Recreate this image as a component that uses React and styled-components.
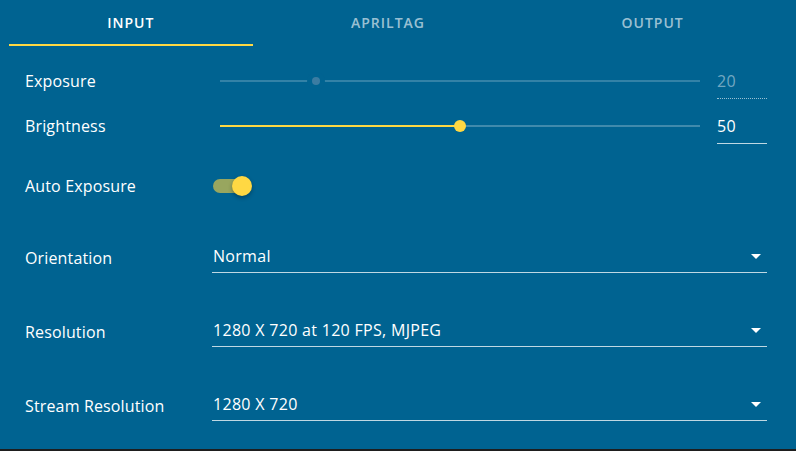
import React from "react";
import styled, { createGlobalStyle } from "styled-components";

const Global = createGlobalStyle`
  html, body { margin: 0; padding: 0; background: #1e1e1e; }
  body { font-family: "Open Sans", "Noto Sans", sans-serif; }
`;

const BG = "#006391";
const YELLOW = "#ffd843";

const Card = styled.div`
  width: 796px;
  height: 449px;
  background: ${BG};
  color: #fff;
  overflow: hidden;
`;

const Tabs = styled.div`
  display: flex;
  height: 46px;
  margin: 0 14px 0 9px;
`;

const Tab = styled.div`
  flex: 1 1 auto;
  display: flex;
  align-items: center;
  justify-content: center;
  padding: 0 16px;
  font-size: 14px;
  font-weight: 600;
  letter-spacing: 1px;
  text-transform: uppercase;
  color: ${(p) => (p.$active ? "#ffffff" : "rgba(255,255,255,0.62)")};
  border-bottom: 2px solid ${(p) => (p.$active ? YELLOW : "transparent")};
  box-sizing: border-box;
`;

const Content = styled.div`
  padding: 12px 29px 0 25px;
`;

const SliderRow = styled.div`
  height: 45px;
  display: grid;
  grid-template-columns: 178px 480px 1fr;
  align-items: center;
  column-gap: 17px;
`;

const Label = styled.div`
  font-size: 16px;
  font-weight: 500;
  letter-spacing: 0.15px;
  color: #fff;
`;

const Slider = styled.div`
  position: relative;
  height: 20px;
`;

const Track = styled.div`
  position: absolute;
  left: 0;
  right: 0;
  top: 9px;
  height: 2px;
  background: rgba(255, 255, 255, ${(p) => (p.$disabled ? 0.2 : 0.25)});
`;

const Fill = styled.div`
  position: absolute;
  left: 0;
  top: 9px;
  height: 2px;
  background: ${YELLOW};
`;

const Thumb = styled.div`
  position: absolute;
  top: 50%;
  width: ${(p) => (p.$disabled ? 8 : 12)}px;
  height: ${(p) => (p.$disabled ? 8 : 12)}px;
  border-radius: 50%;
  transform: translate(-50%, -50%);
  background: ${(p) => (p.$disabled ? "#3b7ca2" : YELLOW)};
  box-shadow: ${(p) => (p.$disabled ? `0 0 0 5px ${BG}` : "none")};
`;

const ValueField = styled.div`
  width: 50px;
  margin-top: 9px;
  padding-bottom: 7px;
  line-height: 20px;
  font-size: 16px;
  font-weight: 500;
  letter-spacing: 0.3px;
  color: ${(p) => (p.$disabled ? "rgba(255,255,255,0.45)" : "#fff")};
  border-bottom: 1px ${(p) => (p.$disabled ? "dotted" : "solid")}
    ${(p) => (p.$disabled ? "rgba(255,255,255,0.6)" : "rgba(255,255,255,0.75)")};
`;

const ToggleRow = styled.div`
  height: 70px;
  margin-top: 3px;
  display: grid;
  grid-template-columns: 187px auto;
  align-items: center;
`;

const Switch = styled.div`
  position: relative;
  width: 34px;
  height: 14px;
  margin-left: 1px;
  border-radius: 7px;
  background: #98a65f;
`;

const Knob = styled.div`
  position: absolute;
  right: -5px;
  top: -3px;
  width: 20px;
  height: 20px;
  border-radius: 50%;
  background: ${YELLOW};
  box-shadow: 0 2px 4px rgba(0, 0, 0, 0.3);
`;

const SelectRow = styled.div`
  height: 74px;
  display: grid;
  grid-template-columns: 187px 1fr;
  align-items: center;
`;

const Select = styled.div`
  display: flex;
  align-items: center;
  justify-content: space-between;
  height: 32px;
  margin-top: -3px;
  padding: 0 6px 0 1px;
  border-bottom: 1px solid rgba(255, 255, 255, 0.75);
  font-size: 16px;
  font-weight: 500;
  letter-spacing: 0.3px;
`;

const Arrow = styled.span`
  width: 0;
  height: 0;
  border-left: 5px solid transparent;
  border-right: 5px solid transparent;
  border-top: 5px solid #fff;
  margin-top: 1px;
`;

const sliders = [
  { label: "Exposure", value: 20, pct: 20, disabled: true },
  { label: "Brightness", value: 50, pct: 50, disabled: false },
];

const selects = [
  { label: "Orientation", value: "Normal" },
  { label: "Resolution", value: "1280 X 720 at 120 FPS, MJPEG" },
  { label: "Stream Resolution", value: "1280 X 720" },
];

export default function App() {
  return (
    <>
      <Global />
      <Card>
        <Tabs>
          <Tab $active>Input</Tab>
          <Tab>AprilTag</Tab>
          <Tab>Output</Tab>
        </Tabs>
        <Content>
          {sliders.map((s) => (
            <SliderRow key={s.label}>
              <Label>{s.label}</Label>
              <Slider>
                <Track $disabled={s.disabled} />
                {!s.disabled && <Fill style={{ width: `${s.pct}%` }} />}
                <Thumb $disabled={s.disabled} style={{ left: `${s.pct}%` }} />
              </Slider>
              <ValueField $disabled={s.disabled}>{s.value}</ValueField>
            </SliderRow>
          ))}
          <ToggleRow>
            <Label>Auto Exposure</Label>
            <Switch>
              <Knob />
            </Switch>
          </ToggleRow>
          {selects.map((s) => (
            <SelectRow key={s.label}>
              <Label>{s.label}</Label>
              <Select>
                <span>{s.value}</span>
                <Arrow />
              </Select>
            </SelectRow>
          ))}
        </Content>
      </Card>
    </>
  );
}
